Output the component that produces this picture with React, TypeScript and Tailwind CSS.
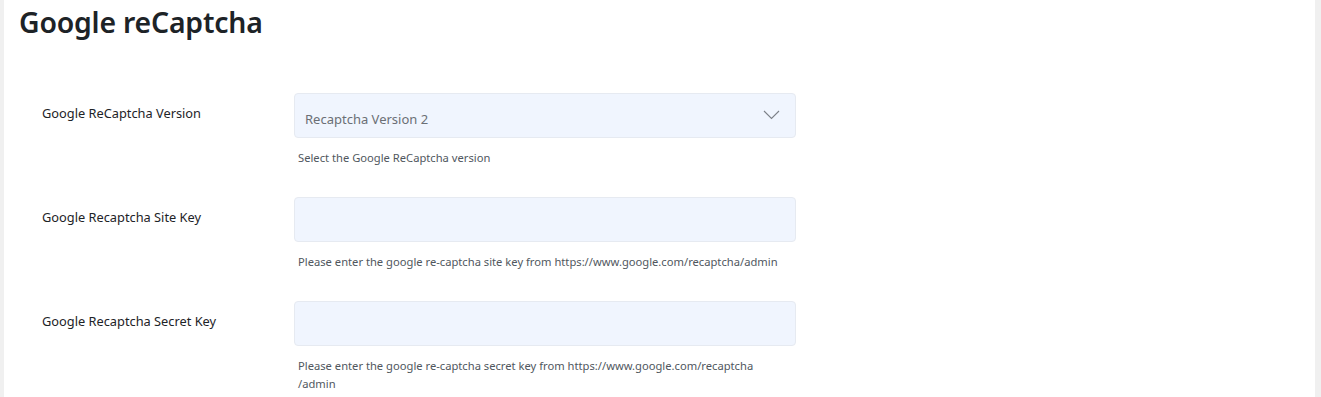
import { useState } from 'react';

const fields = [
  {
    label: 'Google Recaptcha Site Key',
    help: 'Please enter the google re-captcha site key from https://www.google.com/recaptcha',
  },
  {
    label: 'Google Recaptcha Secret Key',
    help: 'Please enter the google re-captcha secret key from https://www.google.com/recaptcha',
  },
];

export default function App() {
  const [version] = useState('Recaptcha Version 2');

  return (
    <div
      className="flex min-h-[397px] bg-[#f0f0f0] pl-[4px] pr-[6px]"
      style={{ fontFamily: '"Noto Sans", "Open Sans", sans-serif' }}
    >
      <div className="flex-1 bg-white">
        {/* Heading */}
        <h1 className="pl-[15px] pt-[1px] text-[28.4px] leading-[42px] font-semibold text-[#1d2327] tracking-[-0.2px]">
          Google reCaptcha
        </h1>

        <div className="flex flex-col pt-[50px]">
          {/* Version select */}
          <div className="flex h-[104px]">
            <label className="w-[290px] shrink-0 pl-[38px] pt-[11px] text-[12.8px] leading-[18px] text-[#1d2327]">
              Google ReCaptcha Version
            </label>
            <div className="w-[502px]">
              <div className="flex h-[45px] items-center justify-between rounded-[4px] border border-[#e6eaf1] bg-[#f0f5fe] pl-[10px] pr-[15px]">
                <span className="pt-[8px] text-[13px] text-[#6b6f75]">{version}</span>
                <svg width="17" height="10" viewBox="0 0 17 10" fill="none" className="mt-[-2px]">
                  <path d="M1 1L8.5 8.5L16 1" stroke="#7c8088" strokeWidth="1.1" />
                </svg>
              </div>
              <p className="mt-[11px] pl-[4px] pr-[10px] text-[11.2px] leading-[18px] text-[#50575e]">
                Select the Google ReCaptcha version
              </p>
            </div>
          </div>

          {fields.map((f) => (
            <div key={f.label} className="flex h-[104px]">
              <label className="w-[290px] shrink-0 pl-[38px] pt-[11px] text-[12.8px] leading-[18px] text-[#1d2327]">
                {f.label}
              </label>
              <div className="w-[502px]">
                <input
                  type="text"
                  className="block h-[45px] w-full rounded-[4px] border border-[#e6eaf1] bg-[#f0f5fe] px-[10px] text-[13px] outline-none"
                />
                <p className="mt-[11px] pl-[4px] pr-[10px] text-[11.2px] leading-[18px] text-[#50575e]">
                  {f.help}
                  <wbr />
                  /admin
                </p>
              </div>
            </div>
          ))}
        </div>
      </div>
    </div>
  );
}
